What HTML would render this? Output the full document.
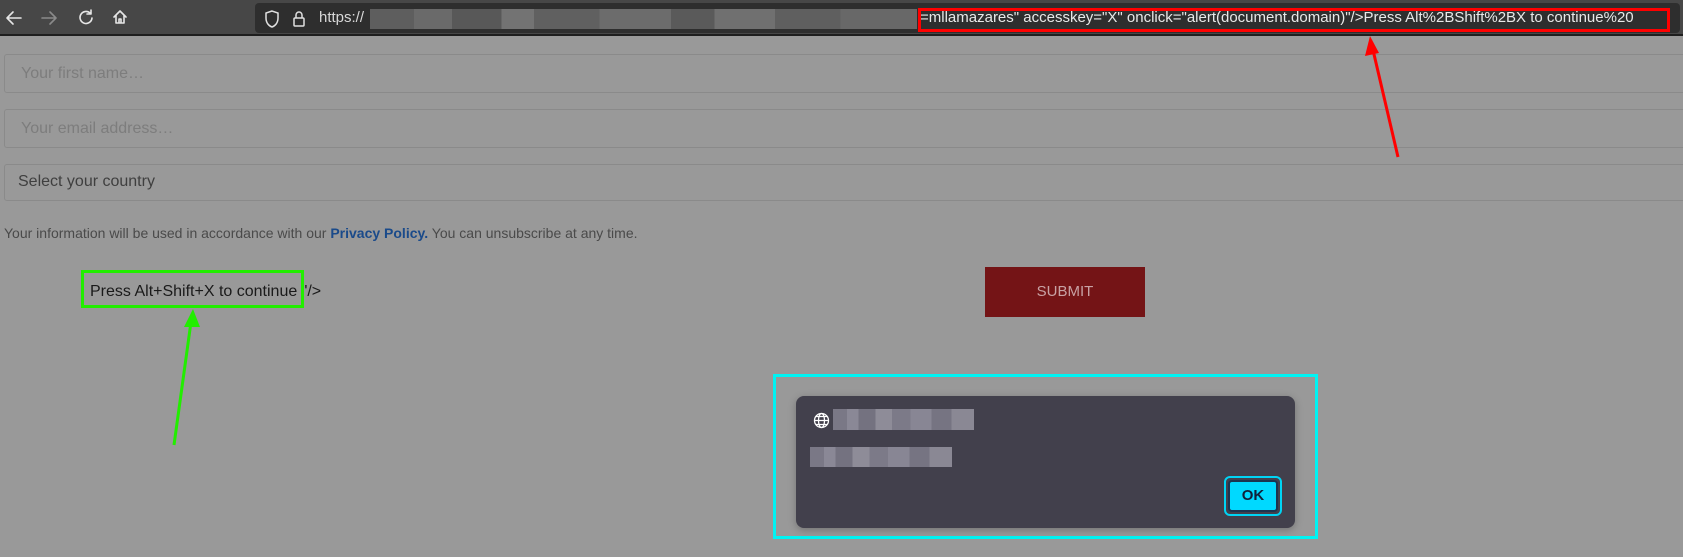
<!DOCTYPE html>
<html><head><meta charset="utf-8"><style>
*{margin:0;padding:0;box-sizing:border-box}
body{width:1683px;height:557px;overflow:hidden;background:#999999;font-family:"Liberation Sans",sans-serif;position:relative}
.abs{position:absolute}
.tb{left:0;top:0;width:1683px;height:36px;background:#474747;border-bottom:2px solid #1e1e1e}
.url{left:255px;top:3px;width:1425px;height:30px;background:#2e2e2e;border-radius:4px}
.urltxt{color:#d8d8d8;font-size:15px;top:9px;white-space:nowrap}
.field{left:4px;width:1700px;border:1px solid #8a8a8a;border-radius:3px;background:#999}
.ph{color:#7d7d7d;font-size:16px;white-space:nowrap}
.blur{background:linear-gradient(90deg,#5e5e5e 0 8%,#6a6a6a 8% 15%,#585858 15% 24%,#737373 24% 30%,#606060 30% 42%,#6c6c6c 42% 55%,#5a5a5a 55% 63%,#707070 63% 74%,#5f5f5f 74% 86%,#686868 86%)}
.db{background:linear-gradient(90deg,#7a7886 0 10%,#8a8896 10% 18%,#747280 18% 30%,#8e8c98 30% 42%,#7c7a88 42% 55%,#888694 55% 70%,#767482 70% 84%,#8a8894 84%)}
</style></head><body>
<div class="abs tb"></div>
<svg class="abs" style="left:0;top:0" width="140" height="36" fill="none" stroke-width="1.6" stroke-linecap="round" stroke-linejoin="round">
<path d="M21 18H8M13 12l-6 6 6 6" stroke="#e6e6e6"/>
<path d="M42 18h13M50 12l6 6-6 6" stroke="#8a8a8a"/>
<path d="M90 13a6 6 0 1 0 2 5M91 10v4h-4" stroke="#e6e6e6"/>
<path d="M114 17l6-6 6 6M116 15v8h8v-8M119 23v-4h2v4" stroke="#e6e6e6"/>
</svg>
<div class="abs url"></div>
<svg class="abs" style="left:262px;top:8px" width="50" height="22" fill="none" stroke="#e0e0e0" stroke-width="1.5">
<path d="M10 3l-6 2v5c0 5 3 8 6 9 3-1 6-4 6-9V5z"/>
<rect x="32" y="10" width="10" height="8" rx="1"/><path d="M34 10V7a3 3 0 0 1 6 0v3"/>
</svg>
<div class="abs urltxt" style="left:319px">https://</div>
<div class="abs blur" style="left:370px;top:9px;width:547px;height:20px"></div>
<div class="abs urltxt" style="left:920px;color:#e8e8e8">=mllamazares" accesskey="X" onclick="alert(document.domain)"/&gt;Press Alt%2BShift%2BX to continue%20</div>
<div class="abs" style="left:918px;top:8px;width:752px;height:24px;border:3px solid #ff0000"></div>

<div class="abs field" style="top:54px;height:39px"></div>
<div class="abs ph" style="left:21px;top:65px">Your first name…</div>
<div class="abs field" style="top:109px;height:39px"></div>
<div class="abs ph" style="left:21px;top:120px">Your email address…</div>
<div class="abs field" style="top:164px;height:37px"></div>
<div class="abs ph" style="left:18px;top:173px;color:#3f3f3f">Select your country</div>
<div class="abs" style="left:4px;top:225px;font-size:14px;color:#4a4a4a;white-space:nowrap">Your information will be used in accordance with our <b style="color:#1a4a8a">Privacy Policy.</b> You can unsubscribe at any time.</div>

<div class="abs" style="left:90px;top:283px;font-size:16px;color:#1a1a1a;white-space:nowrap">Press Alt+Shift+X to continue "/&gt;</div>
<div class="abs" style="left:81px;top:270px;width:223px;height:38px;border:3px solid #22ee00"></div>
<div class="abs" style="left:985px;top:267px;width:160px;height:50px;background:#741416;color:#c8a2a4;font-size:15px;text-align:center;line-height:50px">SUBMIT</div>

<svg class="abs" style="left:0;top:0" width="1683" height="557">
<line x1="174" y1="445" x2="191" y2="322" stroke="#22ee00" stroke-width="3"/>
<path d="M193 309l-9 18h16z" fill="#22ee00"/>
<line x1="1398" y1="157" x2="1373" y2="50" stroke="#ff0000" stroke-width="3"/>
<path d="M1370 36l-5 20 14-3z" fill="#ff0000"/>
</svg>

<div class="abs" style="left:773px;top:374px;width:545px;height:165px;border:3px solid #00f4f4"></div>
<div class="abs" style="left:796px;top:396px;width:499px;height:132px;background:#42404c;border-radius:8px;box-shadow:0 2px 8px rgba(0,0,0,.25)"></div>
<svg class="abs" style="left:813px;top:412px" width="17" height="17" fill="none" stroke="#fff" stroke-width="1.3">
<circle cx="8.5" cy="8.5" r="7"/><ellipse cx="8.5" cy="8.5" rx="3" ry="7"/><path d="M1.5 8.5h14M3 4.5h11M3 12.5h11"/>
</svg>
<div class="abs db" style="left:833px;top:409px;width:141px;height:21px"></div>
<div class="abs db" style="left:810px;top:447px;width:142px;height:20px"></div>
<div class="abs" style="left:1224px;top:476px;width:58px;height:40px;border:2px solid #00d4f4;border-radius:6px;padding:2px"><div style="width:100%;height:100%;background:#00d9ff;border:2px solid #1b3550;border-radius:4px;color:#10203a;font-weight:bold;font-size:15px;text-align:center;line-height:28px">OK</div></div>
</body></html>
